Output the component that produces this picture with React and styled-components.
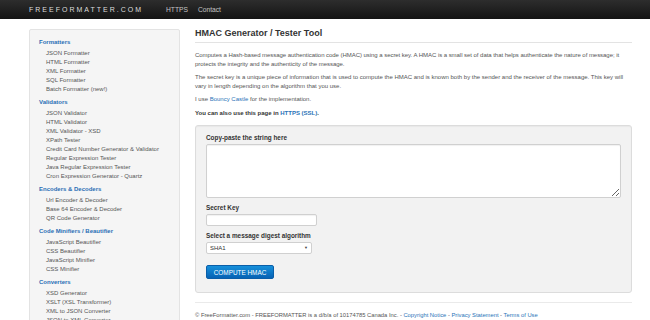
import React from "react";
import styled, { createGlobalStyle } from "styled-components";

const GlobalStyle = createGlobalStyle`
  html, body {
    margin: 0;
    padding: 0;
    background: #fff;
    font-family: "Liberation Sans", Arial, sans-serif;
  }
`;

const menu = [
  {
    title: "Formatters",
    items: ["JSON Formatter", "HTML Formatter", "XML Formatter", "SQL Formatter", "Batch Formatter (new!)"],
  },
  {
    title: "Validators",
    items: [
      "JSON Validator",
      "HTML Validator",
      "XML Validator - XSD",
      "XPath Tester",
      "Credit Card Number Generator & Validator",
      "Regular Expression Tester",
      "Java Regular Expression Tester",
      "Cron Expression Generator - Quartz",
    ],
  },
  {
    title: "Encoders & Decoders",
    items: ["Url Encoder & Decoder", "Base 64 Encoder & Decoder", "QR Code Generator"],
  },
  {
    title: "Code Minifiers / Beautifier",
    items: ["JavaScript Beautifier", "CSS Beautifier", "JavaScript Minifier", "CSS Minifier"],
  },
  {
    title: "Converters",
    items: ["XSD Generator", "XSLT (XSL Transformer)", "XML to JSON Converter", "JSON to XML Converter", "CSV to XML Converter"],
  },
];

export default function App() {
  return (
    <>
      <GlobalStyle />
      <Navbar>
        <Brand>FREEFORMATTER.COM</Brand>
        <NavLink>HTTPS</NavLink>
        <NavLink>Contact</NavLink>
      </Navbar>
      <Page>
        <Sidebar>
          {menu.map((group, i) => (
            <Group key={group.title}>
              <GroupTitle first={i === 0}>{group.title}</GroupTitle>
              {group.items.map((item) => (
                <Item key={item}>{item}</Item>
              ))}
            </Group>
          ))}
        </Sidebar>
        <Main>
          <Title>HMAC Generator / Tester Tool</Title>
          <Para tight>
            Computes a Hash-based message authentication code (HMAC) using a secret key. A HMAC is a small set of
            data that helps authenticate the nature of message; it protects the integrity and the authenticity of
            the message.
          </Para>
          <Para>
            The secret key is a unique piece of information that is used to compute the HMAC and is known both by
            the sender and the receiver of the message. This key will vary in length depending on the algorithm
            that you use.
          </Para>
          <Para>
            I use <Link>Bouncy Castle</Link> for the implementation.
          </Para>
          <Para strong>
            You can also use this page in <Link>HTTPS (SSL)</Link>.
          </Para>
          <Well>
            <Label>Copy-paste the string here</Label>
            <TextArea />
            <Label gap>Secret Key</Label>
            <Input type="text" />
            <Label gap>Select a message digest algorithm</Label>
            <SelectWrap>
              <Select defaultValue="SHA1">
                <option>SHA1</option>
                <option>SHA256</option>
                <option>SHA384</option>
                <option>SHA512</option>
                <option>MD5</option>
              </Select>
            </SelectWrap>
            <Button>COMPUTE HMAC</Button>
          </Well>
          <Footer>
            © FreeFormatter.com - FREEFORMATTER is a d/b/a of 10174785 Canada Inc. -{" "}
            <Link>Copyright Notice</Link> - <Link>Privacy Statement</Link> - <Link>Terms of Use</Link>
          </Footer>
        </Main>
      </Page>
    </>
  );
}

const Navbar = styled.div`
  height: 19px;
  background: linear-gradient(#2d2d2d, #141414);
  display: flex;
  align-items: center;
  padding-left: 29px;
  box-sizing: border-box;
`;

const Brand = styled.span`
  color: #dcdcdc;
  font-size: 7px;
  letter-spacing: 2px;
  margin-right: 23px;
`;

const NavLink = styled.span`
  color: #c4c4c4;
  font-size: 6.7px;
  margin-right: 10px;
`;

const Page = styled.div`
  display: flex;
  align-items: flex-start;
  padding: 10px 0 0 29px;
`;

const Sidebar = styled.div`
  width: 151px;
  box-sizing: border-box;
  background: #f5f5f5;
  border: 1px solid #e3e3e3;
  border-radius: 2px;
  padding: 8px 0 10px;
  flex-shrink: 0;
`;

const Group = styled.div`
  display: flex;
  flex-direction: column;
`;

const GroupTitle = styled.div`
  color: #2a6fb5;
  font-weight: bold;
  font-size: 6px;
  line-height: 9px;
  padding-left: 9px;
  margin: ${(p) => (p.first ? "0" : "4px")} 0 2px;
`;

const Item = styled.div`
  color: #555;
  font-size: 6px;
  line-height: 9px;
  padding-left: 16px;
  white-space: nowrap;
`;

const Main = styled.div`
  width: 437px;
  margin-left: 15px;
  color: #555;
`;

const Title = styled.div`
  color: #333;
  font-weight: bold;
  font-size: 9px;
  line-height: 9px;
  padding: 0 0 4px;
  border-bottom: 1px solid #e3e3e3;
  margin-bottom: 8px;
`;

const Para = styled.p`
  margin: 0 0 5px;
  font-size: 6px;
  line-height: 8.5px;
  letter-spacing: ${(p) => (p.tight ? "-0.045px" : "normal")};
  font-weight: ${(p) => (p.strong ? "bold" : "normal")};
  color: ${(p) => (p.strong ? "#333" : "#555")};
`;

const Link = styled.a`
  color: #2a73b8;
  text-decoration: none;
`;

const Well = styled.div`
  margin-top: 8px;
  background: #f2f2f2;
  border: 1px solid #dcdcdc;
  border-radius: 3px;
  box-shadow: inset 0 1px 1px rgba(0, 0, 0, 0.04);
  padding: 8px 10px 13px;
  display: flex;
  flex-direction: column;
  align-items: flex-start;
`;

const Label = styled.label`
  color: #333;
  font-weight: bold;
  font-size: 6.4px;
  line-height: 8px;
  margin: ${(p) => (p.gap ? "6px" : "0")} 0 2px;
`;

const TextArea = styled.textarea`
  display: block;
  width: 415px;
  height: 54px;
  box-sizing: border-box;
  margin: 0;
  border: 1px solid #d0d0d0;
  border-radius: 2px;
  background: #fff;
  box-shadow: inset 0 1px 1px rgba(0, 0, 0, 0.06);
`;

const Input = styled.input`
  display: block;
  width: 111px;
  height: 12px;
  box-sizing: border-box;
  margin: 0;
  border: 1px solid #d0d0d0;
  border-radius: 2px;
  background: #fff;
  box-shadow: inset 0 1px 1px rgba(0, 0, 0, 0.06);
`;

const SelectWrap = styled.div`
  position: relative;
  display: flex;
  width: 106px;
  height: 12px;
  &::after {
    content: "▼";
    position: absolute;
    right: 4px;
    top: 4px;
    font-size: 4px;
    line-height: 4px;
    color: #444;
    pointer-events: none;
  }
`;

const Select = styled.select`
  appearance: none;
  display: block;
  width: 106px;
  height: 12px;
  box-sizing: border-box;
  margin: 0;
  padding: 0 0 0 3px;
  border: 1px solid #d0d0d0;
  border-radius: 2px;
  background: #fff;
  font-family: "Liberation Sans", Arial, sans-serif;
  font-size: 6px;
  color: #333;
  outline: none;
`;

const Button = styled.button`
  margin-top: 11px;
  width: 68px;
  height: 14px;
  padding: 0;
  border: 1px solid #0a5ea8;
  border-radius: 2px;
  background: linear-gradient(#1690db, #0762b4);
  color: #fff;
  font-family: "Liberation Sans", Arial, sans-serif;
  font-size: 6.4px;
`;

const Footer = styled.div`
  margin-top: 9px;
  border-top: 1px solid #eaeaea;
  padding-top: 8px;
  font-size: 5.8px;
  line-height: 8px;
  color: #555;
`;
